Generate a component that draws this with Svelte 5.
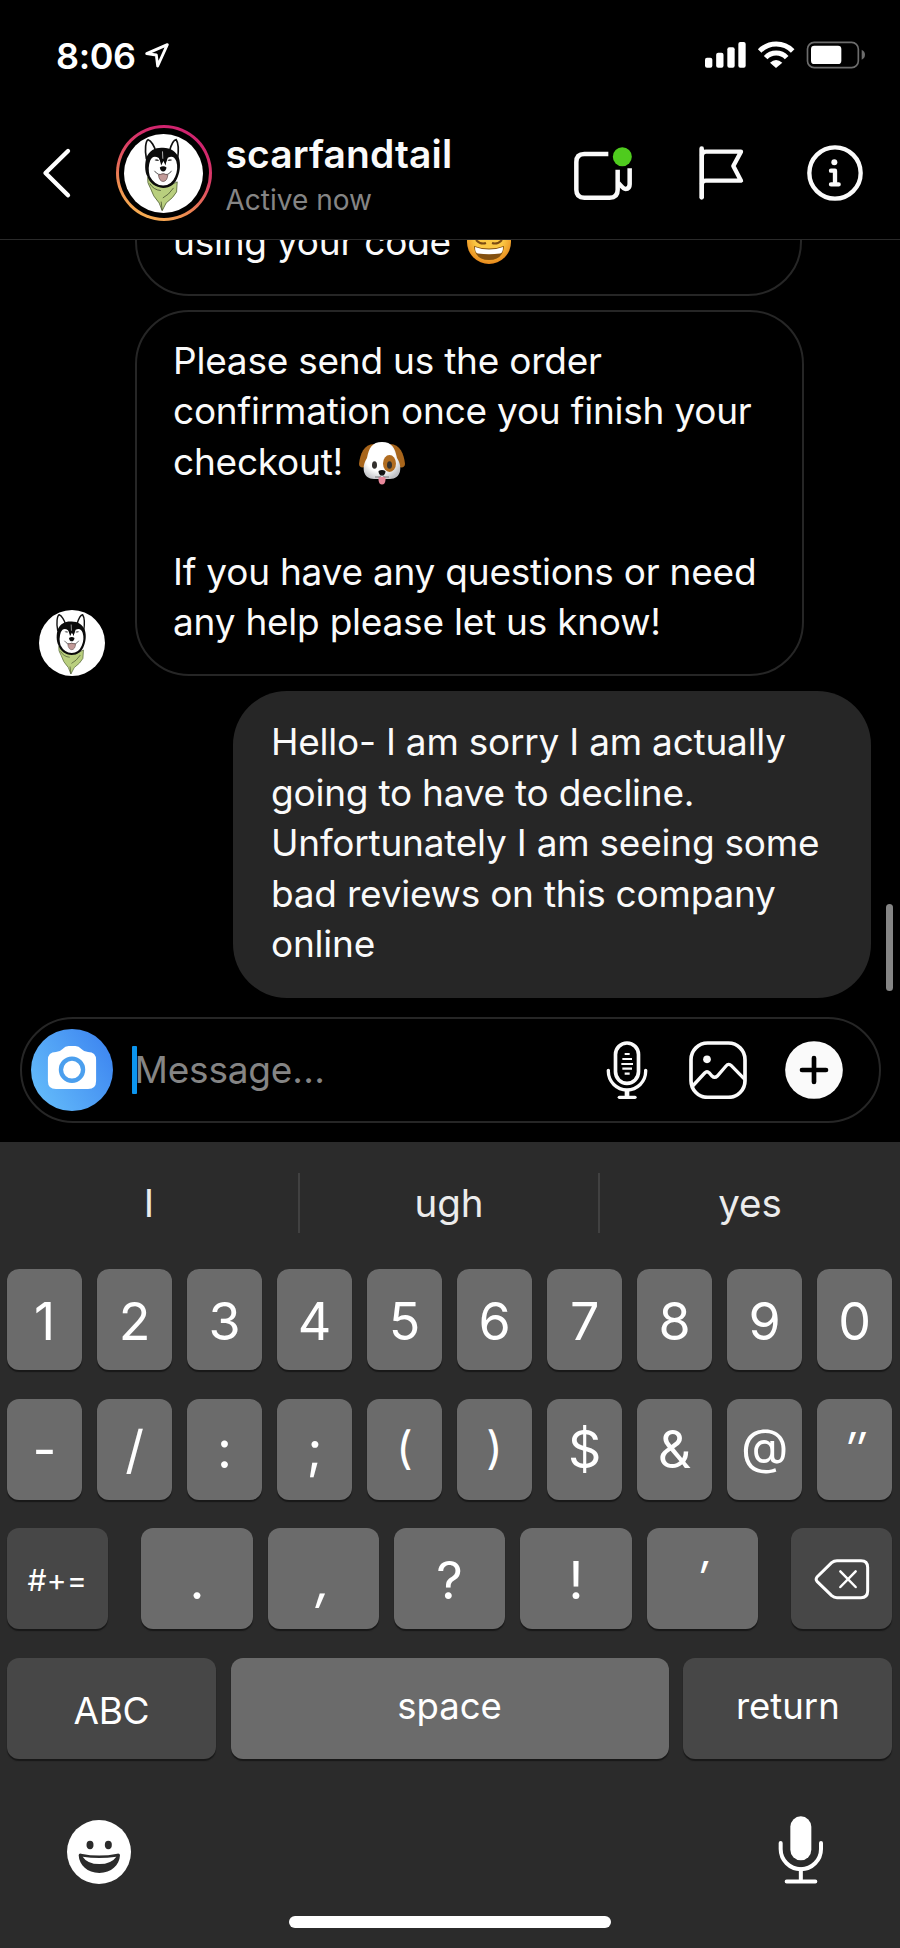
<script>
  const incoming = [
    ['Please send us the order', 'confirmation once you finish your', 'checkout!'],
    ['If you have any questions or need', 'any help please let us know!']
  ];
  const outgoing = [
    'Hello- I am sorry I am actually',
    'going to have to decline.',
    'Unfortunately I am seeing some',
    'bad reviews on this company',
    'online'
  ];
  const suggestions = ['I', 'ugh', 'yes'];
  const rowOne = ['1', '2', '3', '4', '5', '6', '7', '8', '9', '0'];
  const rowTwo = ['-', '/', ':', ';', '(', ')', '$', '&', '@', '″'];
  const rowThree = ['.', ',', '?', '!', '′'];
</script>

{#snippet husky()}
  <svg class="husky" viewBox="42 38 236 236">
    <circle cx="160" cy="156" r="118" fill="#fff" />
    <path d="M113 166Q110 184 121 200Q128 224 147 244L156 267L168 244Q190 228 199 211L201 181Q158 212 113 166Z" fill="#b9cf7e" stroke="#55653a" stroke-width="2.5" />
    <path d="M119 186Q130 205 152 207M190 199Q175 221 158 229M156 266L153 240" fill="none" stroke="#30371f" stroke-width="2" />
    <path d="M109 113C103 84 107 58 114 55C123 58 133 75 137 90" fill="#fff" stroke="#111" stroke-width="5" />
    <path d="M178 89C183 70 190 56 198 55C205 65 205 91 202 113" fill="#fff" stroke="#111" stroke-width="5" />
    <path d="M109 108C117 87 137 78 156 79C180 78 198 90 206 110C212 128 209 151 203 165C196 187 180 199 159 199C136 198 118 184 112 165C103 149 104 125 109 108Z" fill="#0b0b0b" />
    <path d="M120 118Q128 99 146 110L154 127L159 118L166 127L173 109Q190 99 198 119Q205 142 195 165Q184 192 159 192Q133 191 119 164Q112 140 120 118Z" fill="#fff" />
    <path d="M146 100H172L166 132L160 118L153 132Z" fill="#0b0b0b" />
    <path d="M157 90L158 112" stroke="#fff" stroke-width="2" />
    <path d="M133 116Q140 111 147 117Q140 121 133 116ZM172 117Q179 111 186 116Q179 121 172 117Z" fill="#444" />
    <path d="M149 138Q159 131 169 138Q167 150 159 150Q151 150 149 138Z" fill="#0b0b0b" />
    <path d="M133 148Q144 164 159 157Q174 164 184 148" fill="none" stroke="#333" stroke-width="2.5" />
    <path d="M145 160Q159 154 173 160Q171 179 159 180Q147 179 145 160Z" fill="#c29a98" stroke="#5b4545" stroke-width="2" />
  </svg>
{/snippet}

<main class="phone">
  <div class="status">
    <div class="clock">
      <span>8:06</span>
      <svg width="26" height="28" viewBox="433 125 78 84">
        <path d="M441 160L503 133L474 197L470 164Z" fill="none" stroke="#fff" stroke-width="8.5" stroke-linejoin="round" />
      </svg>
    </div>
    <svg class="signals" width="162" height="30" viewBox="764 121 486 90">
      <g fill="#fff">
        <rect x="767" y="174" width="22" height="30" rx="6" />
        <rect x="800.500" y="159" width="22" height="45" rx="6" />
        <rect x="834" y="143" width="22" height="61" rx="6" />
        <rect x="867" y="127" width="22" height="77" rx="6" />
        <path d="M962 189Q980 173 999 189L980 205Z" />
      </g>
      <g fill="none" stroke="#fff" stroke-width="15">
        <path d="M931 154A70 70 0 0 1 1030 154" />
        <path d="M949 174A43 43 0 0 1 1012 174" />
      </g>
      <rect x="1074.500" y="128" width="152.500" height="76" rx="20" fill="none" stroke="#6c6c6c" stroke-width="5" />
      <rect x="1085" y="138" width="91" height="55" rx="10" fill="#fff" />
      <path d="M1237 150Q1247 155 1247 165Q1247 175 1237 180Z" fill="#6c6c6c" />
    </svg>
  </div>

  <header>
    <svg class="back" width="34" height="56" viewBox="120 434 102 168">
      <path d="M204 452L136.500 518L204 585" fill="none" stroke="#fff" stroke-width="13" stroke-linecap="round" stroke-linejoin="round" />
    </svg>
    <div class="story"><div class="gap">{@render husky()}</div></div>
    <div class="who">
      <div class="name">scarfandtail</div>
      <div class="state">Active now</div>
    </div>
    <svg class="video" width="60" height="56" viewBox="370 426 180 168">
      <g fill="none" stroke="#fafafa" stroke-width="13.500">
        <path d="M476 453H404Q380 453 380 477V560Q380 584 404 584H480Q504 584 504 560V500" />
        <path d="M540 496V544Q540 558 528 558Q522 558 506 540" />
      </g>
      <circle cx="518" cy="461" r="28.500" fill="#4fcb1e" />
    </svg>
    <svg class="flag" width="46" height="56" viewBox="744 434 138 168">
      <g fill="none" stroke="#fafafa" stroke-linecap="round" stroke-linejoin="round">
        <path d="M755 445V591" stroke-width="14" />
        <path d="M756 465Q756 454 768 454H873L850 497L873 541H768Q756 541 756 551" stroke-width="13" />
      </g>
    </svg>
    <svg class="info" width="56" height="56" viewBox="1072 434 168 168">
      <circle cx="1156" cy="518" r="77" fill="none" stroke="#fafafa" stroke-width="13" />
      <circle cx="1154" cy="486" r="9" fill="#fafafa" />
      <path d="M1144 511H1156V552M1144 552H1167" fill="none" stroke="#fafafa" stroke-width="13" stroke-linecap="round" stroke-linejoin="round" />
    </svg>
  </header>

  <section class="thread">
    <div class="row">
      <div class="bubble in earlier">
        <p><span>using your code</span><svg class="grin" width="44" height="44" viewBox="0 0 44 44">
          <defs><radialGradient id="skin" cx=".5" cy=".4" r=".6"><stop offset=".55" stop-color="#fbc844" /><stop offset="1" stop-color="#e8891c" /></radialGradient></defs>
          <circle cx="22" cy="22" r="22" fill="url(#skin)" />
          <path d="M9 20Q14 25 19 23M25 23Q30 25 35 20" fill="none" stroke="#7a4a12" stroke-width="2" />
          <path d="M7 26Q22 31 37 26Q36 40 22 40Q8 40 7 26Z" fill="#83500f" />
          <path d="M8 27Q22 32 36 27Q36 33 33 33.500Q22 35 11 33.500Q8 33 8 27Z" fill="#fff" />
        </svg></p>
      </div>
    </div>
    <div class="row">
      <div class="small-avatar">{@render husky()}</div>
      <div class="bubble in full">
        {#each incoming as para, p}
          <p>
            {#each para as line, i}
              <span class="line">{line}{#if p === 0 && i === 2}<svg class="pup" width="48" height="43" viewBox="0 0 48 43">
                <defs><radialGradient id="fur" cx=".45" cy=".4" r=".65"><stop offset=".6" stop-color="#fff" /><stop offset="1" stop-color="#bfc0c4" /></radialGradient></defs>
                <path d="M16 2C6 2 2 12 1 22C1 27 8 26 11 22Z" fill="#a8651b" />
                <path d="M32 2C42 2 46 12 47 22C47 27 40 26 37 22Z" fill="#a8651b" />
                <path d="M24 0C34 0 37 6 39 16C45 25 43 37 32 37H16C5 37 3 25 9 16C11 6 14 0 24 0Z" fill="url(#fur)" />
                <ellipse cx="31.500" cy="21.500" rx="6.500" ry="8.500" fill="#b06c20" />
                <ellipse cx="16.500" cy="23" rx="2.500" ry="3.800" fill="#33302d" />
                <ellipse cx="31.500" cy="23" rx="2.500" ry="3.800" fill="#33302d" />
                <path d="M20.500 35H27.500V38Q27 42.500 24 42.500Q21 42.500 20.500 38Z" fill="#e8889b" />
                <path d="M20.500 29Q24 27 27.500 29Q27.500 33 24 34Q20.500 33 20.500 29Z" fill="#111" />
                <path d="M17 35Q22 36 24 33Q26 36 31 35" fill="none" stroke="#77777a" />
              </svg>{/if}</span>
            {/each}
          </p>
        {/each}
      </div>
    </div>
    <div class="row mine">
      <div class="bubble out">
        <p>
          {#each outgoing as line}<span class="line">{line}</span>{/each}
        </p>
      </div>
    </div>
    <div class="scrollbar"></div>
  </section>

  <section class="composer">
    <div class="field">
      <svg class="camera" width="82" height="82" viewBox="93.500 87.500 245 245">
        <defs><linearGradient id="sky" x1="0" y1=".8" x2="1" y2=".2"><stop offset="0" stop-color="#64bcfa" /><stop offset="1" stop-color="#3d85f0" /></linearGradient></defs>
        <circle cx="216" cy="210" r="122.500" fill="url(#sky)" />
        <path d="M168 156Q180 156 187 148Q196 138 206 138H226Q236 138 245 148Q252 156 264 156Q288 156 288 180V243Q288 267 264 267H168Q144 267 144 243V180Q144 156 168 156Z" fill="#fff" />
        <circle cx="216" cy="209" r="33" fill="none" stroke="#4b9fee" stroke-width="13" />
      </svg>
      <div class="caret"></div>
      <div class="placeholder">Message<span class="dots">...</span></div>
      <svg class="voice" width="42" height="58" viewBox="466 123 126 174">
        <g fill="none" stroke="#fafafa">
          <rect x="494.500" y="129" width="69" height="121" rx="34.500" stroke-width="11" />
          <path d="M473 211V214A56 56 0 0 0 585 214V211" stroke-width="10" stroke-linecap="round" />
          <path d="M529 271V290" stroke-width="14" />
          <path d="M506 292H553" stroke-width="10" stroke-linecap="round" />
          <path d="M522 162H537M515 177H544M512 192H547M515 206H544M522 221H537" stroke-width="6.500" />
        </g>
      </svg>
      <svg class="photo" width="58" height="58" viewBox="716 123 174 174">
        <g fill="none" stroke="#fafafa" stroke-width="11">
          <rect x="722" y="129" width="162" height="163" rx="50" />
          <path d="M727 258L763 219Q770 212 777 219L785 228Q793 236 801 228L827 198Q835 189 843 197L884 239" stroke-width="10" />
        </g>
        <circle cx="770" cy="178" r="11.500" fill="#fafafa" />
      </svg>
      <svg class="plus" width="58" height="58" viewBox="1004 123 174 174">
        <circle cx="1091" cy="210" r="86.500" fill="#fafafa" />
        <path d="M1055 210H1127M1091 174V246" stroke="#000" stroke-width="14" stroke-linecap="round" />
      </svg>
    </div>
  </section>

  <section class="keyboard">
    <div class="suggestions">
      {#each suggestions as word}<div class="word">{word}</div>{/each}
    </div>
    <div class="keys">
      <div class="krow">
        {#each rowOne as k}<div class="key">{k}</div>{/each}
      </div>
      <div class="krow symbols">
        {#each rowTwo as k}<div class="key" class:paren={k === '(' || k === ')'} class:at={k === '@'} class:tick={k === '″'}>{k}</div>{/each}
      </div>
      <div class="krow third">
        <div class="key dark alt">#+=</div>
        <div class="middle">
          {#each rowThree as k}<div class="key" class:slant={k === ','} class:tick={k === '′'}>{k}</div>{/each}
        </div>
        <div class="key dark del">
          <svg width="56" height="42" viewBox="1091 142 168 126">
            <path d="M1100 212Q1095 206 1100 199L1144 156Q1151 150 1160 150H1232Q1252 150 1252 170V241Q1252 261 1232 261H1160Q1151 261 1144 255Z" fill="none" stroke="#fff" stroke-width="9" stroke-linejoin="round" />
            <path d="M1170 182L1216 229M1216 182L1170 229" stroke="#fff" stroke-width="7.500" stroke-linecap="round" />
          </svg>
        </div>
      </div>
      <div class="krow">
        <div class="key dark wide abc">ABC</div>
        <div class="key word-key">space</div>
        <div class="key dark wide word-key">return</div>
      </div>
    </div>
    <div class="tools">
      <svg width="64" height="64" viewBox="201 930 192 192">
        <circle cx="297" cy="1026" r="96" fill="#fff" />
        <ellipse cx="270" cy="1005" rx="10.500" ry="12.500" fill="#2b2b2b" />
        <ellipse cx="325" cy="1005" rx="10.500" ry="12.500" fill="#2b2b2b" />
        <path d="M236 1036Q236 1030 243 1031Q297 1042 352 1031Q360 1030 360 1036C358 1066 334 1089 298 1089C262 1089 238 1066 236 1036Z" fill="#2b2b2b" />
        <path d="M248 1040Q297 1048 349 1040Q334 1062 298 1062Q262 1062 248 1040Z" fill="#fff" />
      </svg>
      <svg width="46" height="68" viewBox="983 917 138 204">
        <rect x="1020" y="918" width="63" height="132" rx="31.500" fill="#fff" />
        <g fill="none" stroke="#fff" stroke-width="12" stroke-linecap="round">
          <path d="M991 998V1016A60.500 60.500 0 0 0 1112 1016V998" />
          <path d="M1051.500 1077V1110M1009 1113.500H1095" />
        </g>
      </svg>
    </div>
    <div class="home"></div>
  </section>
</main>

<style>
  :global(body) { background: #000; }
  .phone {
    width: 900px; height: 1948px; display: flex; flex-direction: column; overflow: hidden;
    background: #000; color: #fafafa; font-family: Inter, "Liberation Sans", sans-serif;
  }
  svg { display: block; flex: none; }

  .status { height: 104px; flex: none; display: flex; justify-content: space-between; padding: 0 34px 0 56px; box-sizing: border-box; }
  .clock { display: flex; gap: 8px; padding-top: 33.5px; font-size: 36px; font-weight: 600; line-height: 44px; letter-spacing: -0.4px; color: #fff; }
  .clock svg { margin-top: 8px; }
  .signals { margin-top: 40px; }

  header { height: 136px; flex: none; box-sizing: border-box; border-bottom: 1px solid #2a2a2a; display: flex; align-items: center; padding: 2px 37px 0 40px; }
  .story { width: 96px; height: 96px; margin-left: 41.5px; margin-top: 1px; border-radius: 50%; background: linear-gradient(205deg, #d1246f 18%, #dc3f66 42%, #ee8b50 72%, #f8b252 90%); padding: 3px; box-sizing: border-box; }
  .gap { width: 90px; height: 90px; border-radius: 50%; background: #000; padding: 5.5px; box-sizing: border-box; }
  .husky { width: 100%; height: 100%; }
  .who { margin-left: 14px; flex: 1; padding-top: 3px; }
  .name { font-size: 39px; font-weight: 600; line-height: 48px; letter-spacing: 0.1px; white-space: nowrap; }
  .state { font-size: 28px; line-height: 36px; color: #858585; margin-top: 4px; letter-spacing: 0; }
  .flag { margin-left: 65px; }
  .info { margin-left: 63px; }

  .thread { position: relative; height: 777px; flex: none; overflow: hidden; display: flex; flex-direction: column; justify-content: flex-end; gap: 14.5px; padding: 0 29px 19px 39px; box-sizing: border-box; }
  .row { display: flex; align-items: flex-end; flex: none; }
  .row.mine { justify-content: flex-end; margin-top: 1px; }
  .small-avatar { width: 66px; height: 66px; margin-right: 30px; }
  .bubble { border-radius: 54px; box-sizing: border-box; font-size: 37px; line-height: 50.5px; letter-spacing: -0.23px; white-space: nowrap; }
  .bubble p { margin: 0; }
  .bubble p + p { margin-top: 59.5px; }
  .in { border: 2.5px solid #262626; padding: 23.5px 34px 26px 36px; }
  .earlier { width: 667px; margin-left: 96px; min-height: 170px; display: flex; align-items: flex-end; }
  .earlier p { display: flex; align-items: center; gap: 16px; }
  .full { width: 669px; }
  .out { width: 638px; background: #262626; padding: 26px 38px 28.5px; }
  .line { display: flex; align-items: center; height: 50.5px; }
  .pup { margin-left: 15px; margin-top: 4px; }
  .scrollbar { position: absolute; right: 7px; top: 664px; width: 7px; height: 87px; border-radius: 4px; background: #858585; }

  .composer { height: 125px; flex: none; padding: 0 19.5px 0 19.5px; box-sizing: border-box; }
  .field { height: 106px; box-sizing: border-box; border: 2.5px solid #262626; border-radius: 53px; display: flex; align-items: center; padding: 0 36px 0 9px; }
  .caret { width: 5px; height: 48px; background: #0c95ef; border-radius: 1px; margin-left: 19px; }
  .placeholder { flex: 1; font-size: 37px; line-height: 48px; color: #858585; letter-spacing: -0.2px; margin-left: -2px; }
  .dots { letter-spacing: 0.4px; }
  .photo { margin-left: 41px; }
  .plus { margin-left: 38px; }

  .keyboard { flex: 1; background: #2b2b2b; display: flex; flex-direction: column; }
  .suggestions { display: grid; grid-template-columns: repeat(3, 1fr); height: 60px; margin-top: 31px; font-size: 38.5px; color: #ececec; }
  .word { text-align: center; line-height: 61px; height: 60px; }
  .word:not(:last-child) { border-right: 2px solid #414141; }
  .keys { display: flex; flex-direction: column; gap: 28.700px; padding: 36px 7.700px 0 6.900px; }
  .krow { display: flex; gap: 14.800px; height: 101px; }
  .key { flex: 1 1 0; height: 101px; border-radius: 12px; background: #6b6b6b; box-shadow: 0 2px 1px #181818; color: #fff; font-size: 52px; line-height: 105px; text-align: center; }
  .symbols .key { line-height: 102px; }
  .symbols .paren { font-size: 45px; line-height: 98px; }
  .symbols .at { font-size: 49px; line-height: 96px; }
  .slant { font-style: italic; }
  .tick, .symbols .tick { font-size: 46px; line-height: 101px; font-style: italic; }
  .dark { background: #474747; }
  .third { gap: 33.500px; }
  .middle { flex: 1; display: flex; gap: 15px; }
  .alt, .del { flex: 0 0 101px; }
  .alt { font-size: 30px; letter-spacing: 0.4px; }
  .del { display: flex; align-items: center; justify-content: center; }
  .wide { flex: 0 0 209px; }
  .abc { font-size: 37px; line-height: 106px; letter-spacing: -0.3px; }
  .word-key { font-size: 36.5px; line-height: 96px; }
  .tools { display: flex; justify-content: space-between; padding: 57px 76.5px 0 67px; align-items: flex-end; }
  .home { width: 322px; height: 12.500px; border-radius: 7px; background: #fff; margin: 31.5px auto 0; }
</style>
